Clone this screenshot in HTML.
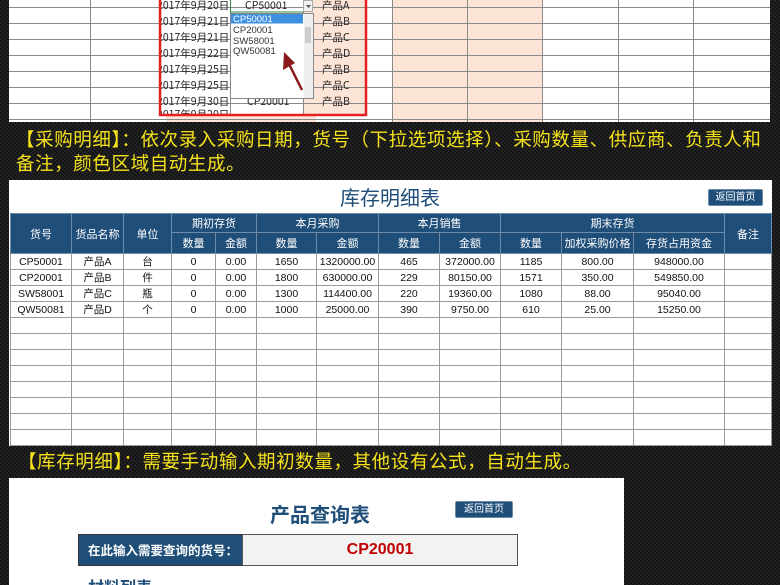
<!DOCTYPE html>
<html><head><meta charset="utf-8">
<style>
*{margin:0;padding:0;box-sizing:border-box}
html,body{width:780px;height:585px;overflow:hidden}
body{position:relative;font-family:"Liberation Sans","Noto Sans CJK SC",sans-serif;
background-color:#151515;
background-image:linear-gradient(45deg,#222 25%,transparent 25%,transparent 75%,#222 75%),linear-gradient(45deg,#222 25%,transparent 25%,transparent 75%,#222 75%);
background-size:4px 4px;background-position:0 0,2px 2px;}
.abs{position:absolute}
.cap{position:absolute;color:#f5e21b;font-size:18.5px;white-space:nowrap;font-family:"Noto Sans CJK SC",sans-serif;letter-spacing:0.6px}
table{border-collapse:collapse;table-layout:fixed}
.inv td{border:1px solid #9a9a9a;font-size:10.5px;text-align:center;height:16px;padding:0;color:#111;white-space:nowrap;overflow:hidden}
.inv th{background:#1f4e79;color:#fff;font-weight:normal;font-size:11px;border:1px solid #6d8aa8;padding:0}
.btn{position:absolute;background:#1f4e79;color:#fff;font-size:10px;text-align:center;border-radius:2px;border:1px solid #6d8aa8}
</style></head><body>

<div class="abs" style="left:9px;top:0;width:761px;height:122px;background:#fff"></div>
<div class="abs" style="left:303px;top:0;width:62px;height:116px;background:#fce4d6"></div>
<div class="abs" style="left:392px;top:0;width:150px;height:122px;background:#fce4d6"></div>
<div class="abs" style="left:166px;top:115px;width:150px;height:7px;background:#fce4d6"></div>
<svg class="abs" style="left:0;top:0" width="780" height="122">
<defs><clipPath id="dc"><rect x="161" y="0" width="69" height="114"/></clipPath></defs>
<g stroke="#8a8a8a" stroke-width="1">
<line x1="9" y1="7.5" x2="770" y2="7.5"/><line x1="9" y1="23.5" x2="770" y2="23.5"/><line x1="9" y1="39.5" x2="770" y2="39.5"/><line x1="9" y1="55.5" x2="770" y2="55.5"/><line x1="9" y1="71.5" x2="770" y2="71.5"/><line x1="9" y1="87.5" x2="770" y2="87.5"/><line x1="9" y1="103.5" x2="770" y2="103.5"/><line x1="9" y1="119.5" x2="770" y2="119.5"/>
<line x1="90.5" y1="0" x2="90.5" y2="122"/><line x1="230.5" y1="0" x2="230.5" y2="116"/><line x1="303.5" y1="0" x2="303.5" y2="116"/><line x1="365.5" y1="0" x2="365.5" y2="116"/><line x1="392.5" y1="0" x2="392.5" y2="122"/><line x1="467.5" y1="0" x2="467.5" y2="122"/><line x1="542.5" y1="0" x2="542.5" y2="122"/><line x1="618.5" y1="0" x2="618.5" y2="122"/><line x1="693.5" y1="0" x2="693.5" y2="122"/>
</g>
<g font-family="Noto Sans CJK SC,sans-serif" font-size="10.5" fill="#222">
<g clip-path="url(#dc)">
<text x="157" y="9">2017年9月20日</text><text x="157" y="25">2017年9月21日</text><text x="157" y="41">2017年9月21日</text><text x="157" y="57">2017年9月22日</text><text x="157" y="73">2017年9月25日</text><text x="157" y="89">2017年9月25日</text><text x="157" y="105">2017年9月30日</text><text x="157" y="118">2017年9月20日</text>
</g>
<text x="245" y="9">CP50001</text><text x="247" y="105">CP20001</text>
<text x="322" y="9">产品A</text><text x="322" y="25">产品B</text><text x="322" y="41">产品C</text><text x="322" y="57">产品D</text><text x="322" y="73">产品B</text><text x="322" y="89">产品C</text><text x="322" y="105">产品B</text>
</g>
<rect x="230.5" y="-1" width="73" height="13" fill="none" stroke="#2e8b3e"/>
<rect x="303.5" y="0.5" width="9" height="11" fill="#f0f0f0" stroke="#aaa"/>
<path d="M306 5l2.5 3 2.5-3z" fill="#555"/>
<rect x="230.5" y="13.5" width="83" height="85" fill="#fff" stroke="#888"/>
<rect x="231" y="14" width="72" height="9.5" fill="#3d8fe0"/>
<rect x="304" y="14" width="9" height="84" fill="#efefef"/>
<rect x="305" y="27" width="6" height="16" fill="#ccc"/>
<g font-family="Liberation Sans,sans-serif" font-size="9.5">
<text x="233" y="22" fill="#fff">CP50001</text><text x="233" y="33" fill="#333">CP20001</text><text x="233" y="44" fill="#333">SW58001</text><text x="233" y="54" fill="#333">QW50081</text></g>
<path d="M302 90 L289 64" stroke="#8b1a1a" stroke-width="2.5"/>
<path d="M284 52 L283 70 L295 63 Z" fill="#8b1a1a"/>
<rect x="160" y="-2" width="206" height="117" fill="none" stroke="#e52020" stroke-width="2.5"/>
</svg>

<div class="cap" style="left:16px;top:126px">【采购明细】：依次录入采购日期，货号（下拉选项选择）、采购数量、供应商、负责人和</div>
<div class="cap" style="left:16px;top:150px">备注，颜色区域自动生成。</div>

<div class="abs" style="left:9px;top:180px;width:763px;height:266px;background:#fff"></div>
<div class="abs" style="left:0;top:184px;width:780px;text-align:center;font-size:20px;color:#1f4e79;font-family:'Noto Sans CJK SC',sans-serif;line-height:26px">库存明细表</div>
<div class="btn" style="left:708px;top:189px;width:55px;height:17px;line-height:15px">返回首页</div>
<table class="inv abs" style="left:10px;top:213px;width:761px">
<colgroup><col style="width:61px"><col style="width:52px"><col style="width:48px"><col style="width:44px"><col style="width:41px"><col style="width:60px"><col style="width:62px"><col style="width:61px"><col style="width:61px"><col style="width:61px"><col style="width:72px"><col style="width:91px"><col style="width:47px"></colgroup>
<tr style="height:19px"><th rowspan="2">货号</th><th rowspan="2">货品名称</th><th rowspan="2">单位</th><th colspan="2">期初存货</th><th colspan="2">本月采购</th><th colspan="2">本月销售</th><th colspan="3">期末存货</th><th rowspan="2">备注</th></tr>
<tr style="height:21px"><th>数量</th><th>金额</th><th>数量</th><th>金额</th><th>数量</th><th>金额</th><th>数量</th><th>加权采购价格</th><th>存货占用资金</th></tr>
<tr><td>CP50001</td><td>产品A</td><td>台</td><td>0</td><td>0.00</td><td>1650</td><td>1320000.00</td><td>465</td><td>372000.00</td><td>1185</td><td>800.00</td><td>948000.00</td><td></td></tr>
<tr><td>CP20001</td><td>产品B</td><td>件</td><td>0</td><td>0.00</td><td>1800</td><td>630000.00</td><td>229</td><td>80150.00</td><td>1571</td><td>350.00</td><td>549850.00</td><td></td></tr>
<tr><td>SW58001</td><td>产品C</td><td>瓶</td><td>0</td><td>0.00</td><td>1300</td><td>114400.00</td><td>220</td><td>19360.00</td><td>1080</td><td>88.00</td><td>95040.00</td><td></td></tr>
<tr><td>QW50081</td><td>产品D</td><td>个</td><td>0</td><td>0.00</td><td>1000</td><td>25000.00</td><td>390</td><td>9750.00</td><td>610</td><td>25.00</td><td>15250.00</td><td></td></tr>
<tr><td></td><td></td><td></td><td></td><td></td><td></td><td></td><td></td><td></td><td></td><td></td><td></td><td></td></tr>
<tr><td></td><td></td><td></td><td></td><td></td><td></td><td></td><td></td><td></td><td></td><td></td><td></td><td></td></tr>
<tr><td></td><td></td><td></td><td></td><td></td><td></td><td></td><td></td><td></td><td></td><td></td><td></td><td></td></tr>
<tr><td></td><td></td><td></td><td></td><td></td><td></td><td></td><td></td><td></td><td></td><td></td><td></td><td></td></tr>
<tr><td></td><td></td><td></td><td></td><td></td><td></td><td></td><td></td><td></td><td></td><td></td><td></td><td></td></tr>
<tr><td></td><td></td><td></td><td></td><td></td><td></td><td></td><td></td><td></td><td></td><td></td><td></td><td></td></tr>
<tr><td></td><td></td><td></td><td></td><td></td><td></td><td></td><td></td><td></td><td></td><td></td><td></td><td></td></tr>
<tr><td></td><td></td><td></td><td></td><td></td><td></td><td></td><td></td><td></td><td></td><td></td><td></td><td></td></tr>
</table>

<div class="cap" style="left:18px;top:448px">【库存明细】：需要手动输入期初数量，其他设有公式，自动生成。</div>

<div class="abs" style="left:9px;top:478px;width:615px;height:107px;background:#fff;overflow:hidden">
<div class="abs" style="left:231px;top:22px;width:160px;text-align:center;font-size:20px;font-weight:bold;color:#1f4e79;font-family:'Noto Sans CJK SC',sans-serif;line-height:28px">产品查询表</div>
<div class="btn" style="left:446px;top:23px;width:58px;height:17px;line-height:15px">返回首页</div>
<div class="abs" style="left:69px;top:56px;width:165px;height:32px;background:#1f4e79;border:1px solid #333;color:#fff;font-size:12.5px;font-weight:bold;line-height:30px;padding-left:9px;font-family:'Noto Sans CJK SC',sans-serif">在此输入需要查询的货号：</div>
<div class="abs" style="left:233px;top:56px;width:276px;height:32px;background:#f2f2f2;border:1px solid #555;color:#c00000;font-size:16px;font-weight:bold;line-height:30px;text-align:center">CP20001</div>
<div class="abs" style="left:79px;top:98px;font-size:16px;font-weight:bold;color:#1f4e79;font-family:'Noto Sans CJK SC',sans-serif;line-height:20px">材料列表</div>
</div>
</body></html>
